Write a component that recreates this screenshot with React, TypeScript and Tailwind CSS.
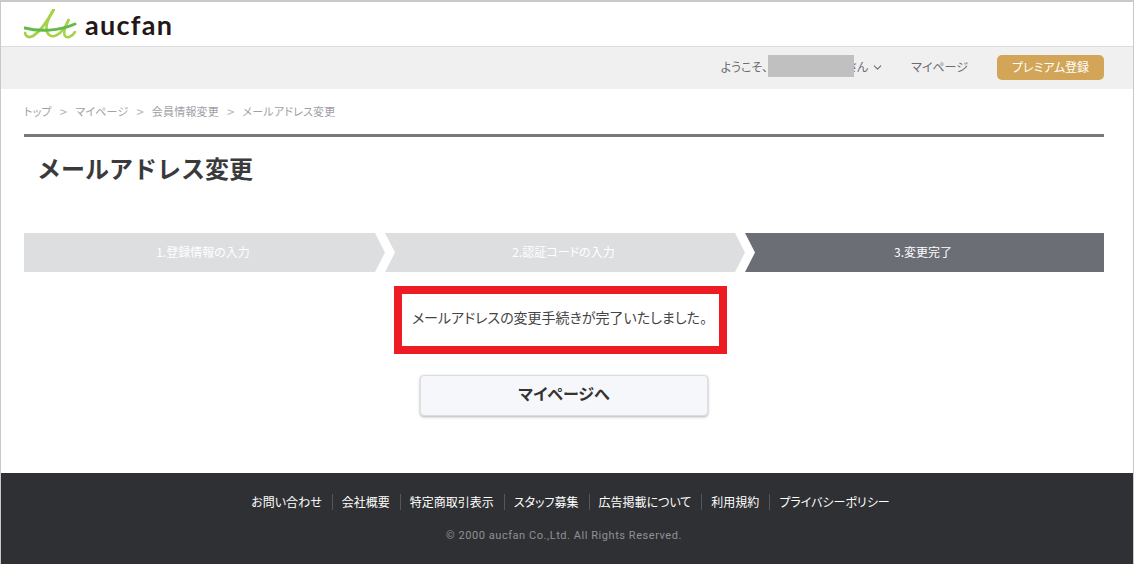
import React from 'react';
import { ChevronDown } from 'lucide-react';

const crumbs = ['トップ', 'マイページ', '会員情報変更', 'メールアドレス変更'];
const footerLinks = ['お問い合わせ', '会社概要', '特定商取引表示', 'スタッフ募集', '広告掲載について', '利用規約', 'プライバシーポリシー'];

const Logo = () => (
  <svg width="54" height="30" viewBox="0 0 54 30" fill="none" className="shrink-0">
    <path d="M1 24C2 28 5 29 9 27C17 22 24 11 29.5 1" stroke="#a6d24a" strokeWidth="2.8" strokeLinecap="round" />
    <path d="M29.5 1C25 8 22 15 22.5 20C23 26 27 28.5 32 26.5C38 24 42 17 44.5 11" stroke="#a6d24a" strokeWidth="2.6" strokeLinecap="round" />
    <path d="M44.5 11C41 18 39 24 41 27C43 29.5 48 28 51 23" stroke="#a6d24a" strokeWidth="2.6" strokeLinecap="round" />
    <path d="M1 19C15 23 35 22 51 15" stroke="#62bb46" strokeWidth="3" strokeLinecap="round" />
  </svg>
);

export default function App() {
  return (
    <div className="flex h-[564px] w-[1134px] flex-col overflow-hidden border-x border-t-2 border-x-[#c9c9c9] border-t-[#c9c9c9] bg-white font-['Noto_Sans_CJK_JP',sans-serif] text-[#333] [font-feature-settings:'palt']">
      {/* Header */}
      <header className="flex h-[45px] items-center gap-[7px] border-b border-[#dcdcdc] pl-[23px]">
        <Logo />
        <span className="font-['Lato',sans-serif] text-[27px] font-bold leading-none tracking-[1.3px] text-[#231815]">aucfan</span>
      </header>
      <div className="flex h-[42px] items-center justify-end bg-[#f0f0f0] pb-[2px] pr-[29px] text-[12px] text-[#6b6b70]">
        <div className="relative flex items-center">
          <span>ようこそ、</span>
          <span className="w-[78px]" />
          <span>さん</span>
          <ChevronDown className="ml-[3px] h-[13px] w-[13px]" />
          <span className="absolute left-[47px] top-[-3px] h-[22px] w-[86px] bg-[#c0c0c0]" />
        </div>
        <span className="ml-[27px]">マイページ</span>
        <button className="ml-[29px] flex h-[25px] w-[107px] items-center justify-center rounded-[5px] bg-[#d2a558] text-[12px] text-white">プレミアム登録</button>
      </div>

      <main className="flex flex-1 flex-col pl-[23px] pr-[29px]">
        {/* Breadcrumb */}
        <nav className="flex h-[45px] items-center text-[11px] tracking-[0.2px] text-[#a0a0a5]">
          {crumbs.map((c, i) => (
            <React.Fragment key={c}>
              {i > 0 && <span className="mx-[8px] text-[13px] leading-none text-[#b4b4b8]">&gt;</span>}
              <span>{c}</span>
            </React.Fragment>
          ))}
        </nav>
        <div className="h-[3px] bg-[#77777c]" />
        <h1 className="ml-[13px] mt-[13px] text-[24px] font-bold leading-[36px] text-[#3a3a3c] [font-feature-settings:normal]">メールアドレス変更</h1>

        {/* Steps */}
        <div className="mt-[47px] flex h-[39px] text-[12px] text-white">
          <div className="flex w-[361px] items-center justify-center bg-[#dddee0] pb-[1px] pr-[3px] [clip-path:polygon(0_0,351px_0,361px_50%,351px_100%,0_100%)]">1.登録情報の入力</div>
          <div className="flex w-[360px] items-center justify-center bg-[#dddee0] pb-[1px] pr-[3px] [clip-path:polygon(0_0,350px_0,360px_50%,350px_100%,0_100%,10px_50%)]">2.認証コードの入力</div>
          <div className="flex w-[359px] items-center justify-center bg-[#6c6e75] pb-[1px] pr-[3px] [clip-path:polygon(0_0,100%_0,100%_100%,0_100%,10px_50%)]">3.変更完了</div>
        </div>

        {/* Message */}
        <div className="ml-[370px] mt-[14px] flex h-[68px] w-[333px] items-center justify-center border-[8px] border-[#ed1c24] pb-[5px] pr-[2px] text-[14px] text-[#444]">
          メールアドレスの変更手続きが完了いたしました。
        </div>
        <button className="mx-auto mt-[21px] h-[41px] w-[288px] rounded-[4px] border border-[#dcdde0] bg-[#f6f7fb] pb-[5px] text-[16px] font-bold text-[#333] shadow-[0_1px_3px_rgba(0,0,0,0.3)]">
          マイページへ
        </button>
      </main>

      {/* Footer */}
      <footer className="flex h-[91px] flex-col items-center bg-[#2f3033] pt-[21px]">
        <ul className="ml-[7px] flex items-center text-[12px] leading-[16px] text-white">
          {footerLinks.map((l, i) => (
            <li key={l} className={i > 0 ? 'ml-[10px] border-l border-[#55565a] pl-[9px]' : ''}>{l}</li>
          ))}
        </ul>
        <p className="mr-[6px] mt-[18px] font-['Roboto',sans-serif] text-[11px] tracking-[0.55px] text-[#8f9093]">© 2000 aucfan Co.,Ltd. All Rights Reserved.</p>
      </footer>
    </div>
  );
}
